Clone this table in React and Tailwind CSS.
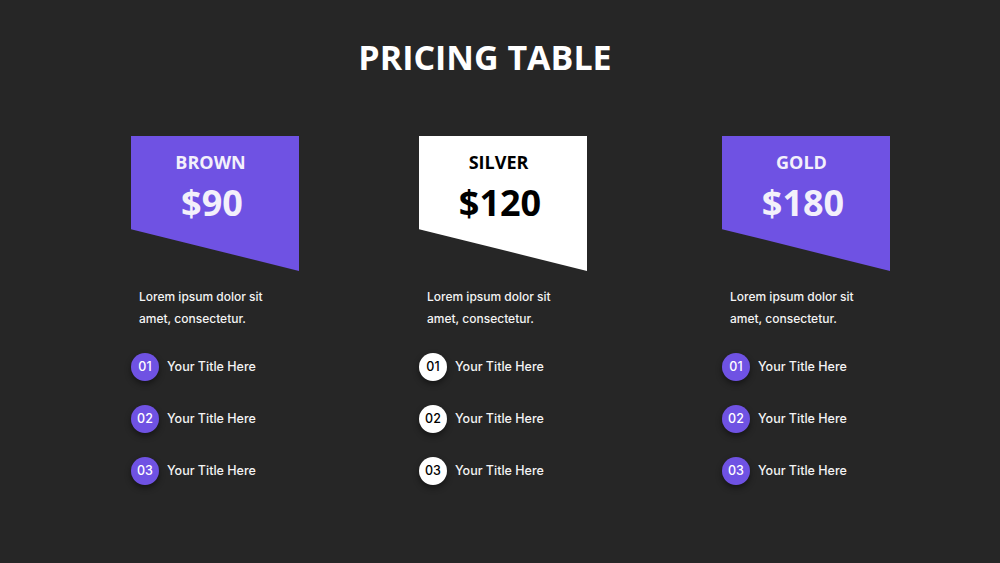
const plans = [
  { name: "BROWN", price: "$90", light: false, ml: "ml-[131px]" },
  { name: "SILVER", price: "$120", light: true, ml: "ml-[120px]" },
  { name: "GOLD", price: "$180", light: false, ml: "ml-[135px]" },
];

const items = ["01", "02", "03"];

function PlanColumn({ plan }) {
  return (
    <div className={`w-[168px] ${plan.ml} flex flex-col`}>
      <div
        className={`h-[135px] w-full flex flex-col items-center pt-[14px] pr-[6px] [clip-path:polygon(0_0,100%_0,100%_100%,0_69%)] ${
          plan.light ? "bg-white text-black" : "bg-[#6f52e3] text-[#f3f0fb]"
        }`}
        style={{ fontFamily: '"Open Sans", sans-serif' }}
      >
        <div className="text-[18px] leading-[24px] font-bold pr-[3px]">{plan.name}</div>
        <div className="text-[36px] leading-[40px] font-bold mt-[9px]">{plan.price}</div>
      </div>
      <p className="mt-[15px] pl-[8px] text-[12px] leading-[22px] font-medium text-[#f4f4f4]">
        Lorem ipsum dolor sit
        <br />
        amet, consectetur.
      </p>
      <div className="mt-[23px] flex flex-col gap-[24px]">
        {items.map((n) => (
          <div key={n} className="flex items-center gap-[8px]">
            <div
              className={`w-[28px] h-[28px] rounded-full flex items-center justify-center text-[12.5px] font-medium shadow-[0_3px_6px_rgba(0,0,0,0.45)] ${
                plan.light ? "bg-white text-black" : "bg-[#6f52e3] text-white"
              }`}
            >
              {n}
            </div>
            <span className="text-[12.5px] font-medium text-[#f4f4f4]">Your Title Here</span>
          </div>
        ))}
      </div>
    </div>
  );
}

export default function App() {
  return (
    <div
      className="w-[1000px] h-[563px] bg-[#262626] overflow-hidden"
      style={{ fontFamily: 'Inter, "Noto Sans", sans-serif' }}
    >
      <h1
        className="pt-[37px] text-center text-white text-[34px] leading-[40px] font-bold pr-[30px]"
        style={{ fontFamily: '"Open Sans", sans-serif' }}
      >
        PRICING TABLE
      </h1>
      <div className="mt-[59px] flex">
        {plans.map((p) => (
          <PlanColumn key={p.name} plan={p} />
        ))}
      </div>
    </div>
  );
}
